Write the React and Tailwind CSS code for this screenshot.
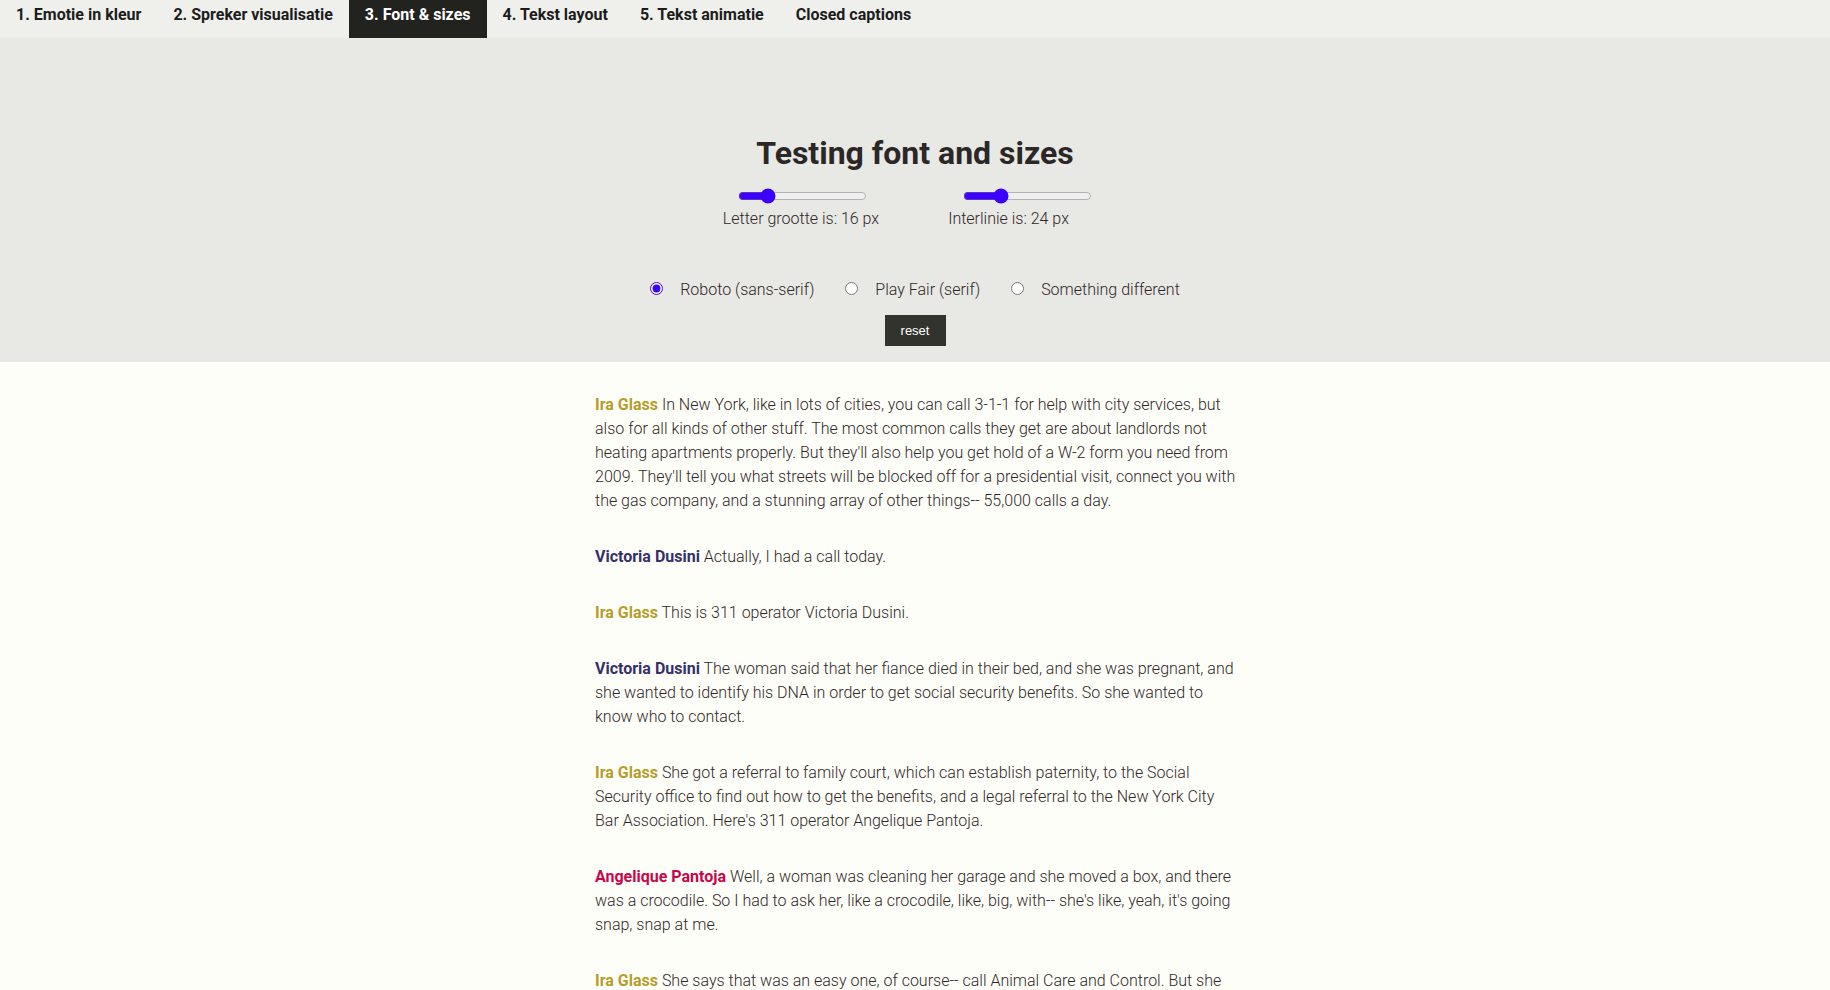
import { useState } from 'react'

const tabs = ['1. Emotie in kleur', '2. Spreker visualisatie', '3. Font & sizes', '4. Tekst layout', '5. Tekst animatie', 'Closed captions']

const speakers = {
    ira: { name: 'Ira Glass', color: 'text-[#b59d2a]' },
    victoria: { name: 'Victoria Dusini', color: 'text-[#352f6b]' },
    angelique: { name: 'Angelique Pantoja', color: 'text-[#c8064a]' },
}

const transcript = [
    { who: 'ira', text: "In New York, like in lots of cities, you can call 3-1-1 for help with city services, but also for all kinds of other stuff. The most common calls they get are about landlords not heating apartments properly. But they'll also help you get hold of a W-2 form you need from 2009. They'll tell you what streets will be blocked off for a presidential visit, connect you with the gas company, and a stunning array of other things-- 55,000 calls a day." },
    { who: 'victoria', text: 'Actually, I had a call today.' },
    { who: 'ira', text: 'This is 311 operator Victoria Dusini.' },
    { who: 'victoria', text: 'The woman said that her fiance died in their bed, and she was pregnant, and she wanted to identify his DNA in order to get social security benefits. So she wanted to know who to contact.' },
    { who: 'ira', text: "She got a referral to family court, which can establish paternity, to the Social Security office to find out how to get the benefits, and a legal referral to the New York City Bar Association. Here's 311 operator Angelique Pantoja." },
    { who: 'angelique', text: "Well, a woman was cleaning her garage and she moved a box, and there was a crocodile. So I had to ask her, like a crocodile, like, big, with-- she's like, yeah, it's going snap, snap at me." },
    { who: 'ira', text: 'She says that was an easy one, of course-- call Animal Care and Control. But she says there are other calls that are much harder to figure out.' },
]

const fonts = ['Roboto (sans-serif)', 'Play Fair (serif)', 'Something different']

export default function App() {
    const [size, setSize] = useState(16)
    const [leading, setLeading] = useState(24)
    const [font, setFont] = useState(0)

    return (
        <div className="min-h-screen bg-[#fefef9] font-['Roboto',sans-serif] text-[#2f2727]">
            {/* Tabs */}
            <nav className="flex h-[38px] bg-[#efefec]">
                {tabs.map((t, i) => (
                    <div
                        key={t}
                        className={`px-4 pt-[5px] text-[16px] font-bold leading-5 ${i === 2 ? 'bg-[#22221e] text-white' : 'text-[#1c1c1c]'}`}
                    >
                        {t}
                    </div>
                ))}
            </nav>

            {/* Controls */}
            <section className="flex h-[324px] flex-col items-center bg-[#e8e8e4] pt-[95px]">
                <h1 className="text-[32px] font-bold leading-10 text-[#2b2727]">Testing font and sizes</h1>
                <div className="mt-[15px] flex gap-[69px] pr-[15px] font-light">
                    <div className="flex flex-col">
                        <input
                            type="range"
                            min={10}
                            max={40}
                            value={size}
                            onChange={(e) => setSize(+e.target.value)}
                            className="ml-[15px] w-[129px] accent-[#3c00ff]"
                        />
                        <span className="mt-[5px] text-[16px] leading-5">Letter grootte is: {size} px</span>
                    </div>
                    <div className="flex flex-col">
                        <input
                            type="range"
                            min={16}
                            max={46}
                            value={leading}
                            onChange={(e) => setLeading(+e.target.value)}
                            className="ml-[15px] w-[129px] accent-[#3c00ff]"
                        />
                        <span className="mt-[5px] text-[16px] leading-5">Interlinie is: {leading} px</span>
                    </div>
                </div>

                <div className="mt-[49px] flex items-center font-light text-[16px]">
                    {fonts.map((f, i) => (
                        <label key={f} className="mr-[31px] flex items-center last:mr-0">
                            <input
                                type="radio"
                                name="font"
                                checked={font === i}
                                onChange={() => setFont(i)}
                                className="mb-[4px] mr-[17px] accent-[#3c00ff]"
                            />
                            {f}
                        </label>
                    ))}
                </div>

                <button className="mt-[13px] h-[31px] w-[61px] bg-[#33332e] font-['Liberation_Sans',sans-serif] text-[13px] text-white">
                    reset
                </button>
            </section>

            {/* Transcript */}
            <main className="mx-auto w-[640px] pt-[31px]">
                {transcript.map((p, i) => {
                    const s = speakers[p.who]
                    return (
                        <p key={i} className="-mr-1 mb-8 text-[16px] font-light leading-6">
                            <span className={`font-bold ${s.color}`}>{s.name}</span> {p.text}
                        </p>
                    )
                })}
            </main>
        </div>
    )
}
